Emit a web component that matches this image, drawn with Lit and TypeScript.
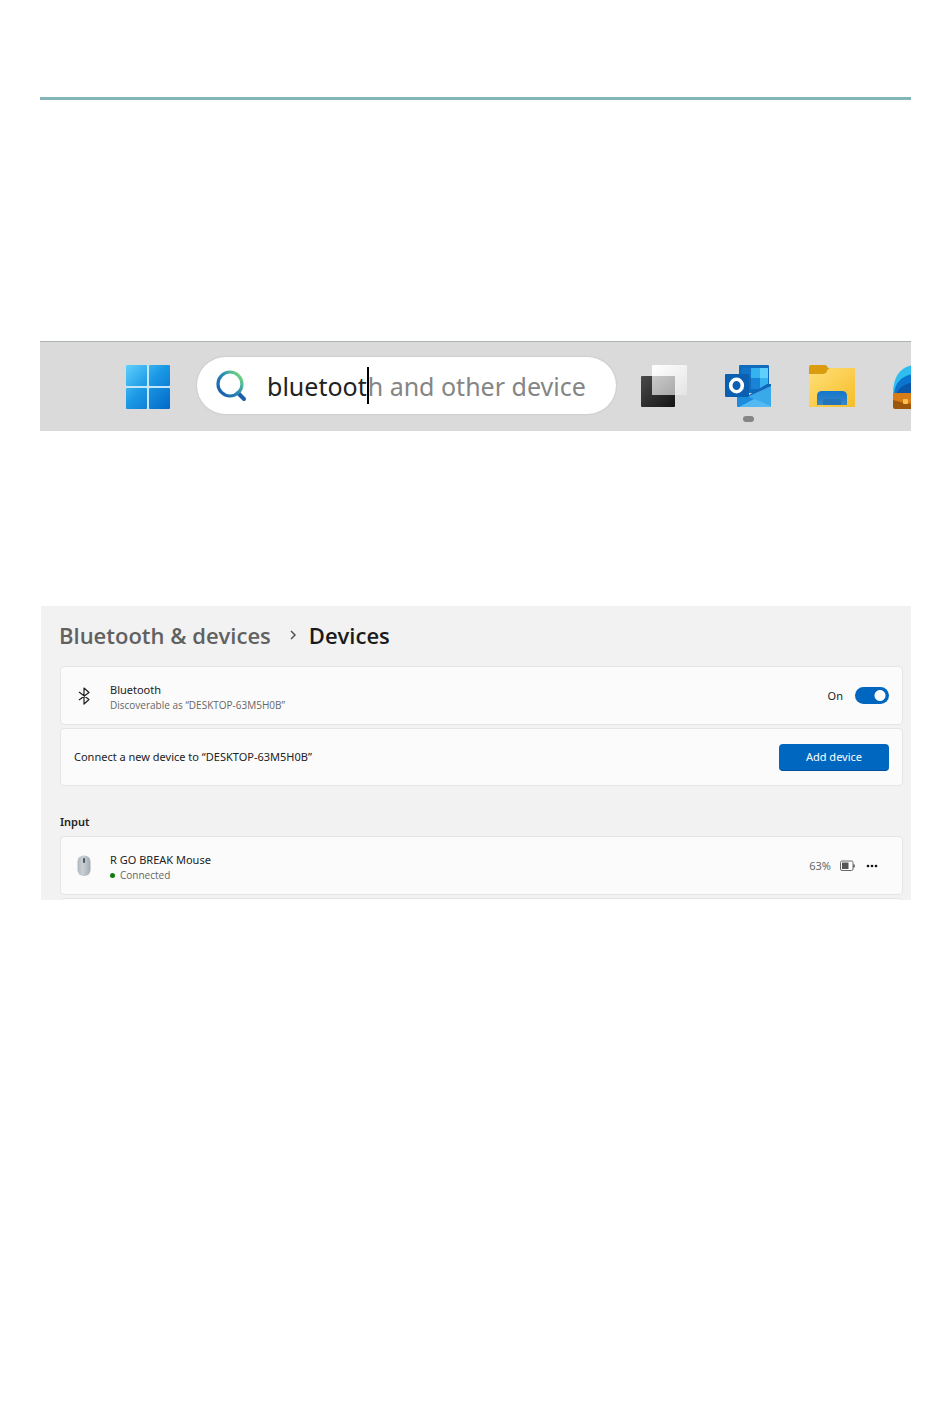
import { LitElement, html, css, svg } from "lit";
import { customElement, state } from "lit/decorators.js";

const startIcon = html`<svg viewBox="0 0 44 44" width="44" height="44" aria-hidden="true">
  <defs><linearGradient id="w" gradientUnits="userSpaceOnUse" x1="0" y1="0" x2="44" y2="44">
    <stop offset="0" stop-color="#5fd0fc"/><stop offset=".45" stop-color="#1c9ae6"/><stop offset="1" stop-color="#0268c8"/>
  </linearGradient></defs>
  <rect width="44" height="44" rx="1" fill="#c4e6f6"/>
  ${[[0, 0], [23, 0], [0, 23], [23, 23]].map(
    ([x, y]) => svg`<rect x=${x} y=${y} width="21" height="21" rx="1" fill="url(#w)"/>`
  )}
</svg>`;

const searchIcon = html`<svg viewBox="0 0 32 32" width="32" height="32" aria-hidden="true">
  <defs><linearGradient id="s" x1="0.1" y1="0.8" x2="0.9" y2="0.1">
    <stop offset="0" stop-color="#1b62b0"/><stop offset=".55" stop-color="#2b93b4"/><stop offset="1" stop-color="#72d67c"/>
  </linearGradient></defs>
  <path d="M22 23 28 29" stroke="#1d5fa8" stroke-width="4" stroke-linecap="round"/>
  <circle cx="14" cy="14" r="12" fill="none" stroke="url(#s)" stroke-width="3.200"/>
</svg>`;

const taskViewIcon = html`<svg viewBox="0 0 46 44" width="46" height="44" aria-hidden="true">
  <defs>
    <linearGradient id="td" x1="0" y1="0" x2="1" y2="1"><stop offset="0" stop-color="#4a4a4a"/><stop offset="1" stop-color="#141414"/></linearGradient>
    <linearGradient id="tl" x1="0" y1="0" x2="1" y2="1"><stop offset="0" stop-color="#fff"/><stop offset="1" stop-color="#e4e4e4"/></linearGradient>
    <linearGradient id="tm" x1="0" y1="0" x2="1" y2="1"><stop offset="0" stop-color="#c9c9c9"/><stop offset="1" stop-color="#a9a9a9"/></linearGradient>
  </defs>
  <rect x="11" width="35" height="30" rx="1" fill="url(#tl)"/>
  <rect y="11" width="34" height="31" rx="1" fill="url(#td)"/>
  <rect x="11" y="11" width="23" height="19" fill="url(#tm)"/>
</svg>`;

const outlookIcon = html`<svg viewBox="0 0 46 44" width="46" height="44" aria-hidden="true">
  <rect x="14" width="30" height="28" rx="1" fill="#0f6cbd"/>
  <rect x="17" y="3" width="9" height="9" fill="#1274c8"/>
  <rect x="26" y="3" width="9" height="10" fill="#35b3ef"/>
  <rect x="35" y="3" width="8" height="10" fill="#5fd0fb"/>
  <rect x="26" y="13" width="9" height="11" fill="#1a83d8"/>
  <rect x="35" y="13" width="8" height="10" fill="#35b3ef"/>
  <path d="M24 30 42 19h4V41H12V24z" fill="#1166b8"/>
  <path d="M46 21v20q0 1-1 1L22 32z" fill="#3aa9ea"/>
  <path d="M12 27 46 41q-.5 1-1.500 1H13q-1 0-1-1z" fill="#52b9f2"/>
  <path d="M12 27 29 34 14 42q-2 0-2-1z" fill="#1d8bdc"/>
  <rect y="9" width="24" height="23" rx="1" fill="#0a5fb0"/>
  <ellipse cx="11.500" cy="20.500" rx="5.800" ry="6.200" fill="none" stroke="#fff" stroke-width="3.600"/>
</svg>`;

const folderIcon = html`<svg viewBox="0 0 46 44" width="46" height="44" aria-hidden="true">
  <defs>
    <linearGradient id="f" x1="0" y1="0" x2="1" y2="1"><stop offset="0" stop-color="#ffe07a"/><stop offset="1" stop-color="#f6bd27"/></linearGradient>
    <linearGradient id="fb" x1="0" y1="0" x2="0" y2="1"><stop offset="0" stop-color="#1376cd"/><stop offset="1" stop-color="#3a86c4"/></linearGradient>
  </defs>
  <path d="M0 2q0-2 2-2h14q2 0 3 3h25q2 0 2 2v10H0z" fill="#dc9c10"/>
  <path d="M0 9h14q3 0 4-3 1-3 4-3h24v38q0 1-1 1H1q-1 0-1-1z" fill="url(#f)"/>
  <path d="M8 40V31q0-5 5-5h20q5 0 5 5v9z" fill="url(#fb)"/>
  <path d="M14 40v-4q0-2 2-2h14q2 0 2 2v4z" fill="#2474bc"/>
</svg>`;

const appIcon = html`<svg viewBox="0 0 46 44" width="46" height="44" aria-hidden="true">
  <path d="M0 29C0 11 8 0 24 0s22 12 22 29z" fill="#2fbdf0"/>
  <path d="M1 29C2 17 10 9 24 9v20z" fill="#0b74cf"/>
  <path d="M3 29C7 21 15 17 24 18v11z" fill="#0a56a8"/>
  <path d="M0 29h46v13q0 2-2 2H2q-2 0-2-2z" fill="#9c570c"/>
  <path d="M0 28h46v7q-12 4-23 4T0 35z" fill="#d77c16"/>
  <rect x="10" y="34" width="5" height="5" rx="1" fill="#ffc14d"/>
</svg>`;

const bluetoothIcon = html`<svg viewBox="0 0 12 18" width="12" height="18" fill="none" stroke="#222" stroke-width="1.200" stroke-linejoin="round" aria-hidden="true">
  <path d="M1 5 11 12.500 6 17V1l5 4.500L1 13"/>
</svg>`;

const mouseIcon = html`<svg viewBox="0 0 14 22" width="14" height="22" aria-hidden="true">
  <defs><linearGradient id="m" x1="0" y1="0" x2="1" y2="0"><stop offset="0" stop-color="#b0b8bf"/><stop offset=".4" stop-color="#c9d0d5"/><stop offset="1" stop-color="#a3abb2"/></linearGradient></defs>
  <rect x=".5" y=".5" width="13" height="20.500" rx="6" fill="url(#m)"/>
  <rect x="6" y="3" width="2" height="5" rx="1" fill="#4e565e"/>
</svg>`;

const batteryIcon = html`<svg viewBox="0 0 16 12" width="16" height="12" aria-hidden="true">
  <rect x=".5" y="1" width="12.500" height="9.500" rx="1.500" fill="#fff" stroke="#666"/>
  <rect x="2" y="2.500" width="6.500" height="6.500" fill="#555"/>
  <path d="M14 4.500v3" stroke="#555" stroke-width="1.500"/>
</svg>`;

@customElement("task-bar")
export class TaskBar extends LitElement {
  static styles = css`
    :host {
      display: flex;
      align-items: center;
      height: 89px;
      padding-left: 86px;
      overflow: hidden;
      background: #dadada;
      border-top: 1px solid #aab4b4;
    }
    svg { display: block; }
    button {
      flex: none;
      padding: 0;
      border: 0;
      background: none;
      font: inherit;
    }
    .search {
      flex: 1;
      min-width: 0;
      display: flex;
      align-items: center;
      gap: 19px;
      height: 57px;
      margin: 0 25px 2px 27px;
      padding: 0 28px 0 19px;
      box-sizing: border-box;
      border-radius: 29px;
      background: #fff;
      box-shadow: 0 0 2px #b4b4b4;
      font-size: 25px;
      line-height: 36px;
    }
    .glass { flex: none; }
    .entry {
      flex: 1;
      min-width: 0;
      display: flex;
      align-items: center;
      overflow: hidden;
      white-space: nowrap;
    }
    .query {
      flex: none;
      field-sizing: content;
      padding: 0;
      border: 0;
      outline: 0;
      background: none;
      color: #222;
      font: inherit;
    }
    .caret { flex: none; width: 2px; height: 37px; margin-right: -1px; background: #000; }
    .hint { color: #858585; }
    .apps { flex: none; display: flex; gap: 38px; }
    .app { display: grid; }
    .app > * { grid-area: 1 / 1; }
    .running {
      align-self: end;
      justify-self: center;
      width: 11px;
      height: 6px;
      margin-bottom: -13px;
      border-radius: 3px;
      background: #868686;
    }
    .cut { width: 18px; overflow: hidden; }
  `;

  render() {
    return html`
      <button aria-label="Start">${startIcon}</button>
      <div class="search">
        <span class="glass">${searchIcon}</span>
        <div class="entry">
          <input class="query" aria-label="Search" value="bluetoot" spellcheck="false" />
          <span class="caret"></span>
          <span class="hint">h and other device</span>
        </div>
      </div>
      <div class="apps">
        <button class="app" aria-label="Task view">${taskViewIcon}</button>
        <button class="app" aria-label="Outlook">${outlookIcon}<span class="running"></span></button>
        <button class="app" aria-label="File Explorer">${folderIcon}</button>
        <button class="app cut" aria-label="App">${appIcon}</button>
      </div>
    `;
  }
}

@customElement("device-settings")
export class DeviceSettings extends LitElement {
  static styles = css`
    :host {
      display: block;
      height: 294px;
      box-sizing: border-box;
      padding: 11px 8px 0 19px;
      overflow: hidden;
      background: #f2f2f2;
      color: #222;
      font-size: 11px;
      line-height: 16px;
    }
    svg { display: block; }
    button { font: inherit; border: 0; }
    .crumbs {
      display: flex;
      align-items: center;
      height: 36px;
      margin: 0 0 13px -1px;
      font-family: "Open Sans", "Noto Sans", sans-serif;
      font-size: 22px;
      line-height: 36px;
      font-weight: 600;
    }
    .crumbs a { color: #616161; text-decoration: none; }
    .crumbs svg { margin: 0 12px 0 18px; }
    h1 { margin: 0; font: inherit; color: #1a1a1a; }
    h2 { margin: 28px 0 6px; font-size: 11px; line-height: 16px; font-weight: 600; }
    .card {
      display: flex;
      align-items: center;
      height: 59px;
      box-sizing: border-box;
      padding: 0 13px;
      border: 1px solid #e5e5e5;
      border-radius: 4px;
      background: #fbfbfb;
    }
    .card + .card { margin-top: 3px; }
    .card.connect { height: 58px; }
    .lead { flex: none; width: 20px; margin-right: 16px; display: grid; place-items: center; }
    .text { flex: 1; min-width: 0; }
    .lead + .text { padding-top: 3px; }
    .sub {
      display: flex;
      align-items: center;
      gap: 5px;
      color: #666;
      font-family: "Open Sans", "Noto Sans", sans-serif;
      font-size: 10px;
      line-height: 14px;
    }
    .dot { width: 5px; height: 5px; border-radius: 50%; background: #107c10; }
    .switch { display: flex; align-items: center; gap: 12px; }
    .switch input {
      appearance: none;
      width: 34px;
      height: 17px;
      margin: 0;
      border-radius: 9px;
      background: radial-gradient(circle at 25px 50%, #fff 5px, #0067c0 6px);
    }
    .switch input:not(:checked) {
      background: radial-gradient(circle at 9px 50%, #fff 5px, #8a8a8a 6px);
    }
    .add {
      width: 110px;
      height: 27px;
      padding: 0;
      border-radius: 4px;
      border-bottom: 1px solid #00509a;
      background: #0067c0;
      color: #fff;
    }
    .level { display: flex; align-items: center; gap: 9px; color: #666; }
    .more { margin: 0 11px 0 10px; padding: 0; background: none; }
  `;

  @state() private on = true;

  render() {
    return html`
      <nav class="crumbs" aria-label="Breadcrumb">
        <a href="#devices">Bluetooth &amp; devices</a>
        <svg viewBox="0 0 8 10" width="8" height="10" fill="none" stroke="#555" stroke-width="1.500" aria-hidden="true"><path d="M2 1l4 4-4 4"/></svg>
        <h1>Devices</h1>
      </nav>
      <div class="card">
        <span class="lead">${bluetoothIcon}</span>
        <div class="text">
          <div>Bluetooth</div>
          <div class="sub">Discoverable as “DESKTOP-63M5H0B”</div>
        </div>
        <label class="switch">
          ${this.on ? "On" : "Off"}
          <input type="checkbox" role="switch" .checked=${this.on}
            @change=${(e: Event) => (this.on = (e.target as HTMLInputElement).checked)} />
        </label>
      </div>
      <div class="card connect">
        <div class="text">Connect a new device to “DESKTOP-63M5H0B”</div>
        <button class="add">Add device</button>
      </div>
      <h2>Input</h2>
      <div class="card">
        <span class="lead">${mouseIcon}</span>
        <div class="text">
          <div>R GO BREAK Mouse</div>
          <div class="sub"><span class="dot"></span>Connected</div>
        </div>
        <span class="level">63% ${batteryIcon}</span>
        <button class="more" aria-label="More options">
          <svg viewBox="0 0 12 4" width="12" height="4" fill="#111" aria-hidden="true">
            <circle cx="2" cy="2" r="1.300"/><circle cx="6" cy="2" r="1.300"/><circle cx="10" cy="2" r="1.300"/>
          </svg>
        </button>
      </div>
      <div class="card"></div>
    `;
  }
}

@customElement("app-root")
export class AppRoot extends LitElement {
  static styles = css`
    :host {
      display: block;
      min-height: 100vh;
      box-sizing: border-box;
      padding: 97px 39px 0 40px;
      background: #fff;
      font-family: "Noto Sans", "Open Sans", sans-serif;
    }
    .rule { height: 3px; margin: 0 0 241px; border: 0; background: #83b5b7; }
    device-settings { margin: 175px 0 0 1px; }
  `;

  render() {
    return html`
      <hr class="rule" />
      <task-bar></task-bar>
      <device-settings></device-settings>
    `;
  }
}
